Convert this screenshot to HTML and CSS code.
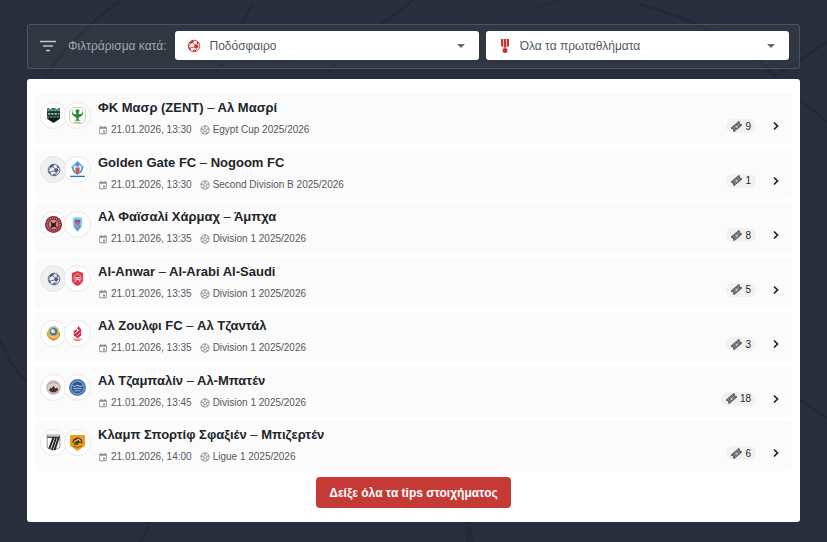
FILE: index.html
```
<!DOCTYPE html>
<html lang="el">
<head>
<meta charset="utf-8">
<meta name="viewport" content="width=device-width, initial-scale=1">
<title>Tips στοιχήματος</title>
<link rel="stylesheet" href="styles.css">
</head>
<body>
<svg class="backdrop" viewBox="0 0 827 542" preserveAspectRatio="xMidYMid slice" aria-hidden="true">
  <g fill="none" stroke="#1d2330" stroke-width="2">
    <path d="M118 2Q70 38 46 76M252 5L243 22M413 0Q395 16 380 24M640 4Q740 34 775 76L827 42M335 64l-8 10M222 64l-6 8M800 100l27 22M800 400l27 18M0 340Q10 366 27 382M140 542Q147 530 150 522M468 542L466 522M472 542L468 522"/>
    <path d="M560 0l-24 8" stroke-width="1"/>
  </g>
</svg>
<svg class="sprite" aria-hidden="true">
  <symbol id="calendar" viewBox="0 0 24 24"><path fill="currentColor" d="M19 4h-1V2h-2v2H8V2H6v2H5a2 2 0 0 0-2 2v14c0 1.100.9 2 2 2h14a2 2 0 0 0 2-2V6a2 2 0 0 0-2-2zm0 16H5V9h14v11zm-2-7h-5v5h5v-5z"/></symbol>
  <symbol id="ball" viewBox="0 0 24 24"><g fill="none" stroke="currentColor" stroke-width="2"><circle cx="12" cy="12" r="10"/><path d="M12 8l4 3-1.500 4.500h-5L8 11zM12 8V5L8.500 2.500M12 5l3.500-2.500M16 11l3-1 2.500 2M19 10l1-4M14.500 15.500l2 3M16.500 18.500h4M16.500 18.500l-2 3M9.500 15.500l-2 3M7.500 18.500h-4M7.500 18.500l2 3M8 11l-3-1-2.500 2M5 10L4 6"/></g></symbol>
  <symbol id="sport" viewBox="0 0 24 24"><circle cx="12" cy="12" r="10" fill="none" stroke="currentColor" stroke-width="1.500"/><path fill="currentColor" d="M13 9l5 0 2 4-4 4-4-3zM4 6l5-4 4 1-3 4-5 2zM2 13l4 2 1 5-3-2zM11 18l4 1-1 3-4-1zM18 4l3 4-3 0-2-3z"/><path d="M10 7l3 2M5 9l-2 4M6 15l6-1M16 17l-1 3M18 9l0-2" stroke="currentColor" stroke-width="1.500"/></symbol>
  <symbol id="ticket" viewBox="0 0 24 24"><g transform="rotate(-40 12 12)"><path fill="currentColor" d="M0 6h24v4a2 2 0 0 0 0 4v4H0v-4a2 2 0 0 0 0-4z"/><path d="M6 7v10M18 7v10" stroke="#e4e4e4" stroke-width="1.300" stroke-dasharray="2 1"/><path d="M12 8l1.300 2.700 3 .3-2.300 2 .7 3-2.700-1.500L9.300 16l.7-3-2.300-2 3-.3z" fill="#c8c8c8"/></g></symbol>
  <symbol id="chevron" viewBox="0 0 12 12"><path d="M4 2.500L7.500 6 4 9.500" fill="none" stroke="currentColor" stroke-width="1.700"/></symbol>
</svg>

<main class="page">
  <form class="filters">
    <svg class="filter-icon" viewBox="0 0 16 12" aria-hidden="true"><path d="M0 1.500h16M3 6h10M6 10.500h4" stroke="#c4c7cc" stroke-width="1.500"/></svg>
    <span class="filter-label">Φιλτράρισμα κατά:</span>
    <div class="field">
      <svg class="field-icon" aria-hidden="true"><use href="#sport"/></svg>
      <select class="field-select" aria-label="Άθλημα"><option>Ποδόσφαιρο</option></select>
      <span class="field-arrow"></span>
    </div>
    <div class="field">
      <svg class="field-icon" viewBox="0 0 14 14" aria-hidden="true"><path d="M3 0h8v7L7 9.500 3 7z" fill="#ecb5b4"/><path d="M3 0h2v8L3 7zM6 0h2v8.500H6zM9 0h2v7L9 8z" fill="currentColor"/><circle cx="7" cy="11.500" r="2.500" fill="currentColor"/></svg>
      <select class="field-select" aria-label="Πρωτάθλημα"><option>Όλα τα πρωταθλήματα</option></select>
      <span class="field-arrow"></span>
    </div>
  </form>

  <section class="panel">
    <ul class="matches">
      <li class="match">
        <div class="logos">
          <span class="logo"><svg viewBox="0 0 16 16"><path d="M2 1h2v1h2V1h4v1h2V1h2v8H2z" fill="#35736a"/><path d="M2 4h12v5H2z" fill="#17342f"/><path d="M3 6.500h10" stroke="#a9c9c2" stroke-width="1.500" stroke-dasharray="2 1"/><path d="M3 3h10" stroke="#d2e6e1" stroke-dasharray="1 2"/><path d="M2 9h12v2l-6 4-6-4z" fill="#101a1a"/><path d="M2 9.500h12" stroke="#44a384" stroke-dasharray="2 1"/></svg></span>
          <span class="logo"><svg viewBox="0 0 16 16"><rect x=".5" y=".5" width="15" height="15" rx="4" fill="#f8fcf5" stroke="#c3dfb8"/><path d="M4 2q-2 4 2 5l1-1-1-3 2-1 2 1-1 3 1 1q4-1 2-5 3 4-1 7l-2 1v2l2 1H5l2-1v-2L5 9Q1 6 4 2z" fill="#278a3a"/><path d="M5 14.500h6" stroke="#d3b267"/></svg></span>
        </div>
        <div class="info">
          <h2 class="teams">ΦΚ Μασρ (ZENT) <span class="dash">–</span> Αλ Μασρί</h2>
          <p class="meta"><svg class="meta-icon"><use href="#calendar"/></svg><time class="time">21.01.2026, 13:30</time><svg class="meta-icon"><use href="#ball"/></svg><span>Egypt Cup 2025/2026</span></p>
        </div>
        <span class="tips"><svg class="tips-icon"><use href="#ticket"/></svg>9</span>
        <a class="open" href="#" aria-label="ΦΚ Μασρ – Αλ Μασρί"><svg class="chevron"><use href="#chevron"/></svg></a>
      </li>
      <li class="match">
        <div class="logos">
          <span class="logo logo-blank"><svg viewBox="0 0 24 24" color="#52647f"><use href="#sport"/></svg></span>
          <span class="logo"><svg viewBox="0 0 16 16"><path d="M8 1L4 4.500q-2 5 4 8 6-3 4-8z" fill="#e6f3fa" stroke="#3494c9"/><circle cx="8" cy="3.500" r="2" fill="#4a9bcc"/><path d="M6 6h4v4l-2 3-2-3z" fill="#d75261"/><path d="M2.500 5l3 6M13.500 5l-3 6" stroke="#3494c9"/><path d="M1 14.500h14" stroke="#2d77b0" stroke-width="1.300"/></svg></span>
        </div>
        <div class="info">
          <h2 class="teams">Golden Gate FC <span class="dash">–</span> Nogoom FC</h2>
          <p class="meta"><svg class="meta-icon"><use href="#calendar"/></svg><time class="time">21.01.2026, 13:30</time><svg class="meta-icon"><use href="#ball"/></svg><span>Second Division B 2025/2026</span></p>
        </div>
        <span class="tips"><svg class="tips-icon"><use href="#ticket"/></svg>1</span>
        <a class="open" href="#" aria-label="Golden Gate FC – Nogoom FC"><svg class="chevron"><use href="#chevron"/></svg></a>
      </li>
      <li class="match">
        <div class="logos">
          <span class="logo"><svg viewBox="0 0 16 16"><circle cx="8" cy="8" r="8" fill="#8c2a35"/><circle cx="8" cy="8" r="6" fill="none" stroke="#d0858b" stroke-width="1.300" stroke-dasharray="1 1"/><circle cx="8" cy="8" r="4.500" fill="#c98c8d"/><path d="M5 5l3 2 3-2-1 4 2 2-4-1-3 2 1-4z" fill="#40151e"/></svg></span>
          <span class="logo"><svg class="crest-small" viewBox="0 0 16 16"><path d="M3 1q5-2 10 0v6q0 5-5 9-5-4-5-9z" fill="#93cbe3"/><path d="M5 3h6v3l-3 1-3-1z" fill="#5865a0"/><circle cx="8" cy="7" r="2.500" fill="#c06292"/><path d="M5 9l3 4 3-4" fill="none" stroke="#4b87b6" stroke-width="1.500"/></svg></span>
        </div>
        <div class="info">
          <h2 class="teams">Αλ Φαϊσαλί Χάρμαχ <span class="dash">–</span> Άμπχα</h2>
          <p class="meta"><svg class="meta-icon"><use href="#calendar"/></svg><time class="time">21.01.2026, 13:35</time><svg class="meta-icon"><use href="#ball"/></svg><span>Division 1 2025/2026</span></p>
        </div>
        <span class="tips"><svg class="tips-icon"><use href="#ticket"/></svg>8</span>
        <a class="open" href="#" aria-label="Αλ Φαϊσαλί Χάρμαχ – Άμπχα"><svg class="chevron"><use href="#chevron"/></svg></a>
      </li>
      <li class="match">
        <div class="logos">
          <span class="logo logo-blank"><svg viewBox="0 0 24 24" color="#52647f"><use href="#sport"/></svg></span>
          <span class="logo"><svg class="crest-small" viewBox="0 0 16 16"><path d="M2 2l6-2 6 2v8q-1 4-6 6-5-2-6-6z" fill="#d83c4c"/><path d="M4 10q0-6 4-7 4 1 4 7" fill="none" stroke="#f4a8ad"/><path d="M5 7h6M6 9h5M5 12l3-5 3 5" stroke="#f9cfd2" fill="none"/></svg></span>
        </div>
        <div class="info">
          <h2 class="teams">Al-Anwar <span class="dash">–</span> Al-Arabi Al-Saudi</h2>
          <p class="meta"><svg class="meta-icon"><use href="#calendar"/></svg><time class="time">21.01.2026, 13:35</time><svg class="meta-icon"><use href="#ball"/></svg><span>Division 1 2025/2026</span></p>
        </div>
        <span class="tips"><svg class="tips-icon"><use href="#ticket"/></svg>5</span>
        <a class="open" href="#" aria-label="Al-Anwar – Al-Arabi Al-Saudi"><svg class="chevron"><use href="#chevron"/></svg></a>
      </li>
      <li class="match">
        <div class="logos">
          <span class="logo"><svg class="crest-small" viewBox="0 0 16 16"><path d="M1 6h14v4q-2 4-7 6-5-2-7-6z" fill="#e59a2d"/><circle cx="8" cy="6" r="6" fill="#b7bd9c"/><circle cx="8" cy="6" r="4" fill="#57746d"/><path d="M6 3l3 1 1 3-3 1-2-2z" fill="#e1e7df"/><path d="M3 10q5 4 10 0" fill="none" stroke="#f5c66c" stroke-width="1.500"/></svg></span>
          <span class="logo"><svg class="crest-small" viewBox="0 0 16 16"><path d="M9 0l3 4v6l-4 3-4-3V5l3-1z" fill="#dc263f"/><path d="M5 8l5-4M7 11l4-4M8 3v3" stroke="#fff"/><path d="M3 14h10M5 15.500h6" stroke="#e76879"/></svg></span>
        </div>
        <div class="info">
          <h2 class="teams">Αλ Ζουλφι FC <span class="dash">–</span> Αλ Τζαντάλ</h2>
          <p class="meta"><svg class="meta-icon"><use href="#calendar"/></svg><time class="time">21.01.2026, 13:35</time><svg class="meta-icon"><use href="#ball"/></svg><span>Division 1 2025/2026</span></p>
        </div>
        <span class="tips"><svg class="tips-icon"><use href="#ticket"/></svg>3</span>
        <a class="open" href="#" aria-label="Αλ Ζουλφι FC – Αλ Τζαντάλ"><svg class="chevron"><use href="#chevron"/></svg></a>
      </li>
      <li class="match">
        <div class="logos">
          <span class="logo"><svg class="crest-small" viewBox="0 0 16 16"><circle cx="8" cy="8" r="7" fill="#d9d0cd" stroke="#c4b5b3" stroke-width="1.500"/><path d="M3 11l2-3 1 1 2-3 2 3 2-1 1 3-3 2H6z" fill="#4d302f"/><path d="M4 4q4-3 8 0M5 13.500h6" stroke="#b99998" fill="none"/></svg></span>
          <span class="logo"><svg viewBox="0 0 16 16"><circle cx="8" cy="8" r="8" fill="#4d78b3"/><circle cx="8" cy="8" r="6" fill="#2f578f" stroke="#8fadd4" stroke-width=".8"/><path d="M3 6l2 1 3-1 3 1 2-1M4 9h8M5 11h6" stroke="#9fb9dc" fill="none"/></svg></span>
        </div>
        <div class="info">
          <h2 class="teams">Αλ Τζαμπαλίν <span class="dash">–</span> Αλ-Μπατέν</h2>
          <p class="meta"><svg class="meta-icon"><use href="#calendar"/></svg><time class="time">21.01.2026, 13:45</time><svg class="meta-icon"><use href="#ball"/></svg><span>Division 1 2025/2026</span></p>
        </div>
        <span class="tips"><svg class="tips-icon"><use href="#ticket"/></svg>18</span>
        <a class="open" href="#" aria-label="Αλ Τζαμπαλίν – Αλ-Μπατέν"><svg class="chevron"><use href="#chevron"/></svg></a>
      </li>
      <li class="match">
        <div class="logos">
          <span class="logo"><svg viewBox="0 0 16 16"><path d="M2 1h12v11q-1 2-6 3-5-1-6-3z" fill="#fff" stroke="#999"/><path d="M2 3h12" stroke="#555" stroke-width="1.500"/><path d="M8 3L4 14M10.500 3L6.500 15M13 3L9 15" stroke="#222" stroke-width="1.800"/></svg></span>
          <span class="logo"><svg viewBox="0 0 16 16"><path d="M1 1h14v10l-7 5-7-5z" fill="#e99c22"/><path d="M4 5l4-2 4 2 1 4-3-1-2 2-4 0 2-2-3 0z" fill="#51401f"/><path d="M5 7l4-2 2 2" stroke="#f5dfae" fill="none"/><path d="M4 11.500l4 1 4-1" stroke="#8f6011" fill="none"/></svg></span>
        </div>
        <div class="info">
          <h2 class="teams">Κλαμπ Σπορτίφ Σφαξιέν <span class="dash">–</span> Μπιζερτέν</h2>
          <p class="meta"><svg class="meta-icon"><use href="#calendar"/></svg><time class="time">21.01.2026, 14:00</time><svg class="meta-icon"><use href="#ball"/></svg><span>Ligue 1 2025/2026</span></p>
        </div>
        <span class="tips"><svg class="tips-icon"><use href="#ticket"/></svg>6</span>
        <a class="open" href="#" aria-label="Κλαμπ Σπορτίφ Σφαξιέν – Μπιζερτέν"><svg class="chevron"><use href="#chevron"/></svg></a>
      </li>
    </ul>
    <button class="show-all" type="button">Δείξε όλα τα tips στοιχήματος</button>
  </section>
</main>
</body>
</html>
```
FILE: styles.css
```
* { box-sizing: border-box; }

body {
  margin: 0;
  background: #282e3b;
  color: #212529;
  font-family: "Liberation Sans", Arial, sans-serif;
  font-size: 12px;
}

.backdrop {
  position: absolute;
  inset: 0;
  width: 100%;
  height: 100%;
  opacity: .5;
  z-index: -1;
}

.sprite { display: none; }

.page {
  min-height: 100vh;
  padding: 24px 27px 20px;
  display: flex;
  flex-direction: column;
  gap: 10px;
}

.filters {
  display: flex;
  align-items: center;
  padding: 6px 10px 8px 12px;
  border: 1px solid #4d535e;
  border-radius: 3px;
  background: rgba(255, 255, 255, .04);
}

.filter-icon { width: 16px; height: 12px; margin-right: 12px; }

.filter-label { color: #a3a7ae; margin-right: 9px; white-space: nowrap; }

.field {
  position: relative;
  flex: 1;
  display: flex;
  color: #c33834;
}

.field + .field { margin-left: 7px; }

.field-icon {
  position: absolute;
  left: 12px;
  top: 8px;
  width: 14px;
  height: 14px;
}

.field-select {
  appearance: none;
  width: 100%;
  height: 29px;
  padding: 0 30px 0 34px;
  border: 0;
  border-radius: 3px;
  background: #fff;
  color: #54585c;
  font: inherit;
}

.field-arrow {
  position: absolute;
  right: 14px;
  top: 13px;
  border: 4px solid transparent;
  border-top-color: #62666b;
  border-bottom: 0;
  pointer-events: none;
}

.panel {
  flex: 1;
  display: flex;
  flex-direction: column;
  align-items: center;
  gap: 6px;
  padding: 15px 8px 14px;
  border-radius: 3px;
  background: #fff;
}

.matches {
  flex: 1;
  align-self: stretch;
  display: flex;
  flex-direction: column;
  justify-content: space-between;
  gap: 4px;
  margin: 0;
  padding: 0;
  list-style: none;
}

.match {
  display: flex;
  padding: 5px 10px 6px 5px;
  border-radius: 3px;
  background: #fbfbfb;
}

.logos { display: flex; align-items: center; height: 32px; margin-right: 7px; }

.logo {
  width: 27px;
  height: 27px;
  display: flex;
  align-items: center;
  justify-content: center;
  border: 1px solid #e8e8e8;
  border-radius: 50%;
  background: #fff;
}

.logo + .logo { margin-left: -3px; }

.logo svg { width: 17px; height: 17px; }

.logo .crest-small { width: 15px; height: 15px; }

.logo-blank { background: #eff0f3; border-color: #e2e4e8; }

.logo-blank svg { width: 14px; height: 14px; }

.info { flex: 1; min-width: 0; }

.teams { margin: 0; font-size: 13px; line-height: 18px; font-weight: 700; }

.dash { font-weight: 400; }

.meta {
  display: flex;
  align-items: center;
  margin: 5px 0 0;
  color: #54585c;
  font-size: 10px;
  line-height: 16px;
}

.meta-icon { width: 10px; height: 10px; margin-right: 3px; color: #8a8d91; }

.time { margin-right: 8px; }

.tips {
  align-self: flex-end;
  display: flex;
  align-items: center;
  gap: 3px;
  height: 14px;
  margin-bottom: 5px;
  padding: 0 5px;
  border-radius: 7px;
  background: #f1f1f1;
  font-size: 10px;
}

.tips-icon { width: 11px; height: 11px; color: #5d6064; }

.open {
  align-self: flex-end;
  display: flex;
  height: 14px;
  align-items: center;
  margin: 0 0 5px 14px;
  color: #1e2125;
}

.chevron { width: 12px; height: 12px; }

.show-all {
  height: 31px;
  padding: 0 13px;
  border: 0;
  border-radius: 4px;
  background: #c53a35;
  color: #fff;
  font: inherit;
  font-weight: 700;
}
```
